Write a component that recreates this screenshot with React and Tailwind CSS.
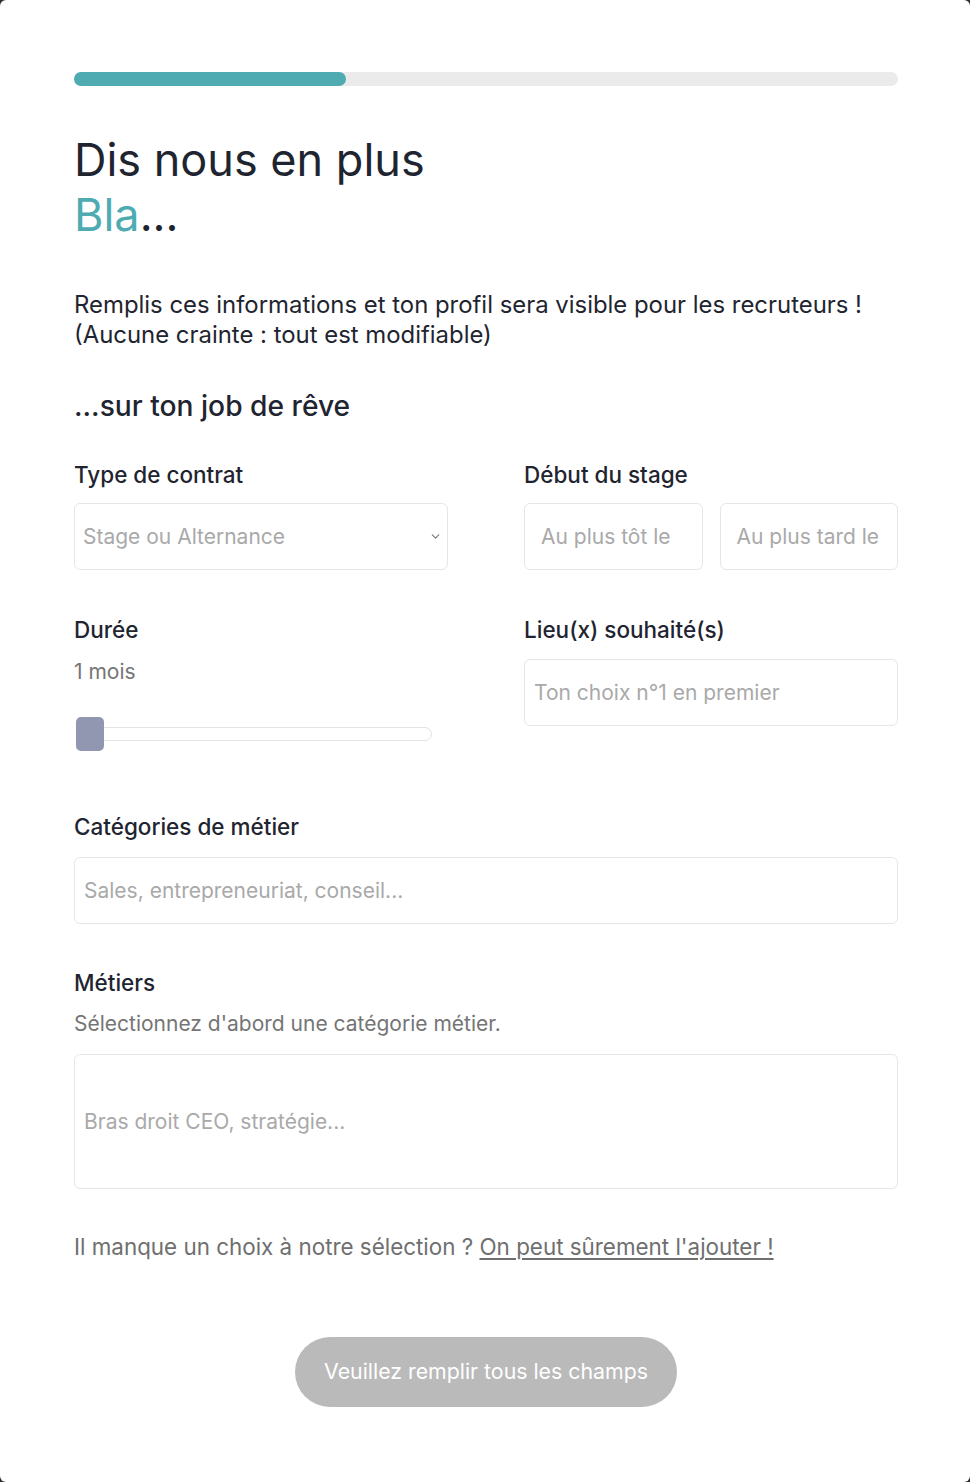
import { ChevronDown } from 'lucide-react';

function Label({ children }) {
  return <div className="text-[22.5px] font-medium text-[#1f2530] leading-[28px]">{children}</div>;
}

function Field({ placeholder, className = '' }) {
  return (
    <div className={`h-[67px] border border-[#e6e6e6] rounded-[6px] flex items-center px-[9px] text-[21px] text-[#a9a9a9] ${className}`}>
      {placeholder}
    </div>
  );
}

export default function App() {
  return (
    <div className="bg-[#2e2e2e] min-h-[1482px]" style={{ fontFamily: 'Inter, "Noto Sans", sans-serif' }}>
      <div className="bg-white h-[1482px] rounded-[6px] pl-[74px] pr-[72px] pt-[72px]">
        {/* progress */}
        <div className="h-[14px] bg-[#ebebeb] rounded-full">
          <div className="h-full w-[33%] bg-[#4eabb2] rounded-full" />
        </div>

        <h1 className="mt-[46px] text-[45px] leading-[55px] text-[#1f2530]">
          Dis nous en plus
          <br />
          <span className="text-[#4eabb2]">Bla</span>...
        </h1>

        <p className="mt-[48px] text-[23.9px] leading-[30px] text-[#1f2530]">
          Remplis ces informations et ton profil sera visible pour les recruteurs !
          <br />
          (Aucune crainte : tout est modifiable)
        </p>

        <h2 className="mt-[38px] text-[28.2px] leading-[36px] font-medium text-[#1f2530]">...sur ton job de rêve</h2>

        <div className="mt-[37px] grid grid-cols-2 gap-x-[76px]">
          <div>
            <Label>Type de contrat</Label>
            <div className="mt-[14px] h-[67px] border border-[#e6e6e6] rounded-[6px] flex items-center justify-between pl-[8px] pr-[5px] text-[21px] text-[#a9a9a9]">
              <span>Stage ou Alternance</span>
              <ChevronDown className="w-[13px] h-[13px] text-[#777]" strokeWidth={2} />
            </div>
          </div>
          <div>
            <Label>Début du stage</Label>
            <div className="mt-[14px] grid grid-cols-2 gap-[17px]">
              <Field placeholder="Au plus tôt le" className="px-[16px]" />
              <Field placeholder="Au plus tard le" className="px-[16px]" />
            </div>
          </div>

          <div className="mt-[46px]">
            <Label>Durée</Label>
            <div className="mt-[14px] text-[21px] leading-[28px] text-[#757575]">1 mois</div>
            <div className="mt-[31px] relative w-[356px] ml-[2px] h-[34px] flex items-center">
              <div className="w-full h-[14px] border border-[#e3e3e3] rounded-full bg-white" />
              <div className="absolute left-0 top-0 w-[28px] h-[34px] rounded-[5px] bg-[#9197b0]" />
            </div>
          </div>
          <div className="mt-[46px]">
            <Label>Lieu(x) souhaité(s)</Label>
            <Field placeholder="Ton choix n°1 en premier" className="mt-[15px]" />
          </div>
        </div>

        <div className="mt-[62px]">
          <Label>Catégories de métier</Label>
          <Field placeholder="Sales, entrepreneuriat, conseil..." className="mt-[16px]" />
        </div>

        <div className="mt-[45px]">
          <Label>Métiers</Label>
          <div className="mt-[13px] text-[21px] leading-[28px] text-[#757575]">Sélectionnez d'abord une catégorie métier.</div>
          <Field placeholder="Bras droit CEO, stratégie..." className="mt-[16px] h-[135px]" />
        </div>

        <p className="mt-[43px] text-[22.4px] leading-[30px] text-[#6f6f6f]">
          Il manque un choix à notre sélection ?{' '}
          <a className="underline underline-offset-[3px]" href="#">On peut sûrement l'ajouter !</a>
        </p>

        <div className="mt-[75px] flex justify-center">
          <button className="w-[382px] h-[70px] rounded-full bg-[#bababa] text-white text-[21.3px]">
            Veuillez remplir tous les champs
          </button>
        </div>
      </div>
    </div>
  );
}
